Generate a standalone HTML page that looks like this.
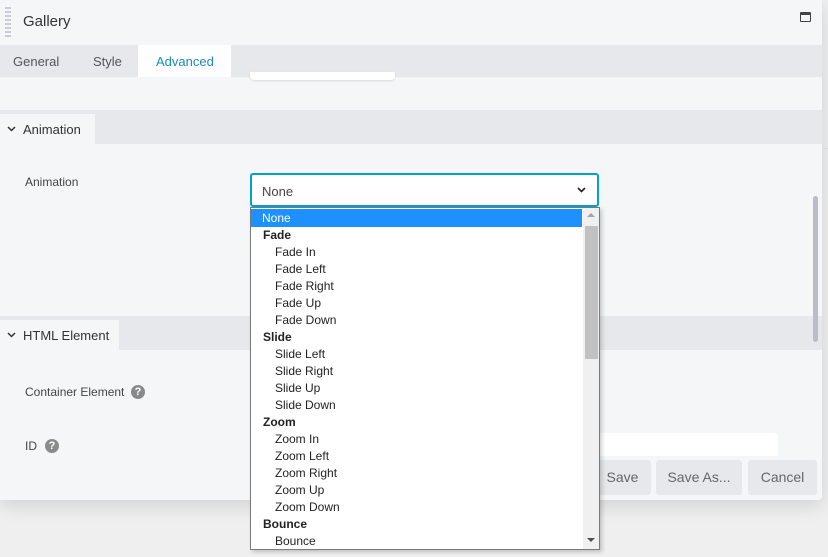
<!DOCTYPE html>
<html><head><style>
*{margin:0;padding:0;box-sizing:border-box}
body{width:828px;height:557px;background:#efefef;font-family:"Liberation Sans",sans-serif;position:relative;overflow:hidden;color:#444}
.a{position:absolute}
.panel{left:0;top:0;width:822px;height:500px;background:#f5f6f8;box-shadow:0 6px 18px rgba(0,0,0,.12);border-radius:0 0 4px 0;overflow:hidden}
.dd div{height:17px;line-height:17px;font-size:12px;color:#222;white-space:nowrap}
.dd .g{font-weight:bold;padding-left:12px}
.dd .o{padding-left:24px}
.btn{top:460px;height:35px;background:#e6e8ec;border-radius:3px;color:#666;font-size:14px;line-height:35px;text-align:center}
.help{width:14px;height:14px;border-radius:50%;background:#8a8a8a;color:#fff;font-size:11px;font-weight:bold;text-align:center;line-height:14px}
</style></head><body>
<div class="a panel">
  <div class="a" style="left:5px;top:7px;width:6px;height:30px;background:repeating-linear-gradient(#c9ccd2 0 2px,transparent 2px 4px)"></div>
  <div class="a" style="left:23px;top:13px;font-size:15px;color:#333">Gallery</div>
  <div class="a" style="left:800px;top:12px;width:11px;height:10px;border:1.5px solid #444;border-top-width:3px;border-radius:1px"></div>
  <div class="a" style="left:0;top:45px;width:822px;height:32px;background:#e6e8ec"></div>
  <div class="a" style="left:13px;top:54px;font-size:13px;color:#555">General</div>
  <div class="a" style="left:93px;top:54px;font-size:13px;color:#555">Style</div>
  <div class="a" style="left:138px;top:45px;width:93px;height:32px;background:#fff"></div>
  <div class="a" style="left:156px;top:54px;font-size:13px;color:#1a8bb8">Advanced</div>
  <div class="a" style="left:250px;top:72px;width:145px;height:8px;background:#fff;border-radius:0 0 4px 4px;box-shadow:0 1px 2px rgba(0,0,0,.12)"></div>
  <div class="a" style="left:0;top:110px;width:822px;height:34px;background:#e6e8ec"></div>
  <div class="a" style="left:0;top:114px;width:95px;height:30px;background:#f5f6f8"></div>
  <svg class="a" style="left:7px;top:126px" width="9" height="6"><path d="M1 1 L4.5 4.5 L8 1" stroke="#333" stroke-width="1.5" fill="none"/></svg>
  <div class="a" style="left:23px;top:122px;font-size:13px;color:#333">Animation</div>
  <div class="a" style="left:25px;top:175px;font-size:12px;color:#444">Animation</div>
  <div class="a" style="left:250px;top:173px;width:349px;height:34px;background:#fff;border:2px solid #00a0d2;border-radius:3px"></div>
  <div class="a" style="left:262px;top:184px;font-size:13px;color:#444">None</div>
  <svg class="a" style="left:577px;top:187px" width="9" height="6"><path d="M1 1 L4.5 4.5 L8 1" stroke="#222" stroke-width="1.6" fill="none"/></svg>
  <div class="a" style="left:0;top:316px;width:822px;height:34px;background:#e6e8ec"></div>
  <div class="a" style="left:0;top:320px;width:119px;height:30px;background:#f5f6f8"></div>
  <svg class="a" style="left:7px;top:332px" width="9" height="6"><path d="M1 1 L4.5 4.5 L8 1" stroke="#333" stroke-width="1.5" fill="none"/></svg>
  <div class="a" style="left:23px;top:328px;font-size:13px;color:#333">HTML Element</div>
  <div class="a" style="left:25px;top:385px;font-size:12px;color:#444">Container Element</div>
  <div class="a help" style="left:131px;top:385px">?</div>
  <div class="a" style="left:25px;top:439px;font-size:12px;color:#444">ID</div>
  <div class="a help" style="left:45px;top:439px">?</div>
  <div class="a" style="left:560px;top:433px;width:218px;height:30px;background:#fff;border-radius:3px"></div>
  <div class="a" style="left:560px;top:456px;width:262px;height:44px;background:#f5f6f8"></div>
  <div class="a btn" style="left:594px;width:57px">Save</div>
  <div class="a btn" style="left:656px;width:86px">Save As...</div>
  <div class="a btn" style="left:748px;width:69px">Cancel</div>
  <div class="a" style="left:813px;top:196px;width:5px;height:146px;background:#b9bdc5;border-radius:3px"></div>
</div>
<div class="a" style="left:822px;top:148px;width:6px;height:1px;background:#ddd"></div>
<div class="a dd" style="left:250px;top:207px;width:350px;height:343px;background:#fff;border:1px solid #7a7a7a;box-shadow:2px 2px 4px rgba(0,0,0,.2);overflow:hidden;padding-top:1px">
  <div style="background:#1e90ff;color:#fff;padding-left:11px;width:331px;height:18px;line-height:19px">None</div>
  <div class="g">Fade</div><div class="o">Fade In</div><div class="o">Fade Left</div><div class="o">Fade Right</div><div class="o">Fade Up</div><div class="o">Fade Down</div>
  <div class="g">Slide</div><div class="o">Slide Left</div><div class="o">Slide Right</div><div class="o">Slide Up</div><div class="o">Slide Down</div>
  <div class="g">Zoom</div><div class="o">Zoom In</div><div class="o">Zoom Left</div><div class="o">Zoom Right</div><div class="o">Zoom Up</div><div class="o">Zoom Down</div>
  <div class="g">Bounce</div><div class="o">Bounce</div>
  <div class="a" style="left:332px;top:0;width:16px;height:341px;background:#f0f0f0"></div>
  <div class="a" style="left:334px;top:18px;width:13px;height:133px;background:#c1c1c1"></div>
  <div class="a" style="left:336px;top:5px;width:0;height:0;border:4px solid transparent;border-bottom:4px solid #a3a3a3;border-top:0"></div>
  <div class="a" style="left:336px;top:330px;width:0;height:0;border:4px solid transparent;border-top:4px solid #505050;border-bottom:0"></div>
</div>
</body></html>
